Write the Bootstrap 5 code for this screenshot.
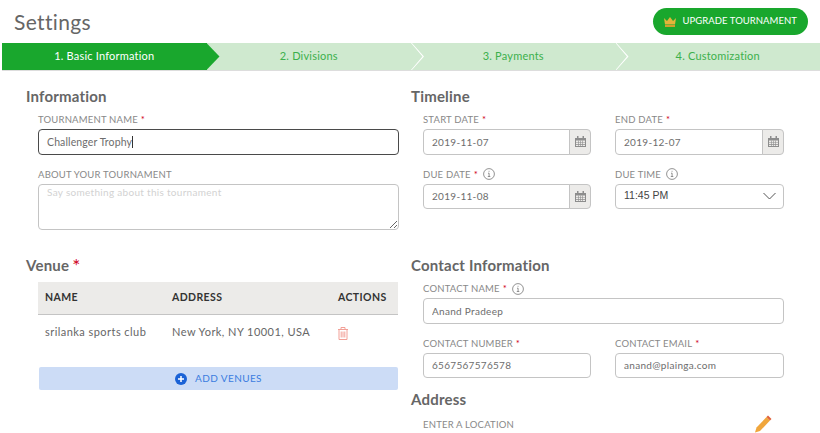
<!DOCTYPE html>
<html lang="en">
<head>
    <meta charset="UTF-8">
    <title>Settings</title>
    <link href="https://cdn.jsdelivr.net/npm/bootstrap@5.3.0/dist/css/bootstrap.min.css" rel="stylesheet">
    <style>
        html, body { height: 433px; overflow: hidden; }
        body { font-family: Lato, "Liberation Sans", sans-serif; color: #666; background: #fff; letter-spacing: .3px; }
        .top-head { height: 43px; padding: 0 12px 0 14px; }
        .page-title { font-size: 21px; line-height: 1; font-weight: 400; color: #666; margin: 0; letter-spacing: .35px; }
        .upgrade-btn { background: #19a72d; color: #fff; border: 0; border-radius: 14px; height: 27px; width: 155px; font-size: 9.5px; letter-spacing: .05px; padding: 0; }
        .upgrade-btn:hover { background: #19a72d; color: #fff; }
        .stepper { height: 28px; margin-left: 2px; background: #cfe9cf; border-bottom: 1px solid #ddd; }
        .step-item { position: relative; width: 204.5px; font-size: 11px; letter-spacing: .2px; color: #3cb04c; }
        .step-item:last-child { width: auto; flex-grow: 1; }
        .step-active { background: #19a72d; color: #fff; }
        .step-item::after { content: ""; position: absolute; z-index: 1; top: 0; right: -13px; width: 13px; height: 27px; }
        .step-active::after { background: #19a72d; clip-path: polygon(0 0, 100% 50%, 0 100%); }
        .step-plain::after { background: #fff; clip-path: polygon(0 0, 7% 0, 100% 50%, 7% 100%, 0 100%, 88% 50%); }
        .step-item:last-child::after { display: none; }
        .form-area { padding: 15px 0 0 26px; }
        .form-side { width: 385px; }
        .top-block { height: 169px; }
        .block-title { font-size: 15px; line-height: 20px; font-weight: 700; color: #666; margin: 0 0 7px; letter-spacing: .2px; }
        .block-body { padding-left: 12px; width: 373px; }
        .field-box { margin-bottom: 13px; }
        .field-label { display: flex; align-items: center; font-size: 9.5px; line-height: 13px; height: 13px; color: #888; margin-bottom: 3px; letter-spacing: .2px; }
        .req { color: #d0021b; margin-left: 3px; }
        .info-ic { margin-left: 5px; width: 12px; height: 12px; }
        .form-control, .form-select, .input-group-text { font-size: 10px; border-color: #c4c4c4; border-radius: 4px; letter-spacing: .3px; color: #6d6d6d; }
        .form-control, .form-select { height: 25.5px; min-height: 0; padding: 0 8px; }
        .form-control:focus { border-color: #4a4a4a; box-shadow: none; color: #6d6d6d; }
        .name-wrap { position: relative; }
        .name-input { font-size: 10.5px; letter-spacing: .12px; border-color: #4a4a4a; caret-color: transparent; }
        .fake-caret { position: absolute; left: 94px; top: 7px; width: 1px; height: 12px; background: #333; }
        textarea.form-control { height: 46.5px; padding-top: 0; resize: vertical; }
        .form-control::placeholder { color: #d2d2d2; }
        .input-group-text { width: 22px; padding: 0; justify-content: center; background: #ecebe9; }
        .form-select { font-family: "Liberation Sans", sans-serif; font-size: 10.5px; letter-spacing: 0; color: #444; background-size: 13px 8px; background-position: right 7px center; background-image: url("data:image/svg+xml,%3csvg xmlns='http://www.w3.org/2000/svg' viewBox='0 0 13 8'%3e%3cpath fill='none' stroke='%23555' d='M.5 1l6 6 6-6'/%3e%3c/svg%3e"); }
        .two-col { display: grid; grid-template-columns: 168px 169px; column-gap: 24px; }
        .venue-table { width: 360px; font-size: 11px; margin-bottom: 17px; table-layout: fixed; }
        .venue-table th { background: #ecebe9; color: #333; height: 32px; padding: 0 7px; font-weight: 700; font-size: 10.5px; vertical-align: middle; border-bottom: 1px solid #c4c4c4; letter-spacing: .4px; }
        .venue-table td { height: 36px; padding: 0 7px; color: #666; vertical-align: middle; border: 0; letter-spacing: .45px; }
        .add-venue { width: 359px; height: 23px; margin-left: 1px; background: #ccdcf6; color: #3b7de0; border: 0; font-size: 10px; letter-spacing: .4px; border-radius: 2px; padding: 0; }
        .add-venue:hover { background: #ccdcf6; color: #3b7de0; }
        .venue-star { color: #d0021b; font-weight: 400; font-size: 19px; line-height: 1; margin-left: 3px; vertical-align: -2px; }
        .address-title { margin-top: -2px; }
        .address-row { width: 349px; margin-top: -1px; }
        .address-label { margin-top: 3px; }
    </style>
</head>
<body>
<div class="top-head d-flex justify-content-between align-items-center">
    <h1 class="page-title">Settings</h1>
    <button class="btn upgrade-btn d-flex align-items-center justify-content-center gap-1" type="button">
        <svg width="12" height="10" viewBox="0 0 12 10"><path fill="#e0b53a" d="M0 1l3 3 3-4 3 4 3-3-1 6.5H1z"/><rect x="1" y="8" width="10" height="2" fill="#cfa02c"/></svg>
        &nbsp;UPGRADE TOURNAMENT
    </button>
</div>

<div class="stepper d-flex">
    <div class="step-item step-active d-flex align-items-center justify-content-center">1. Basic Information</div>
    <div class="step-item step-plain d-flex align-items-center justify-content-center">2. Divisions</div>
    <div class="step-item step-plain d-flex align-items-center justify-content-center">3. Payments</div>
    <div class="step-item step-plain d-flex align-items-center justify-content-center">4. Customization</div>
</div>

<div class="form-area">
    <div class="d-flex top-block">
        <div class="form-side">
            <h2 class="block-title">Information</h2>
            <div class="block-body">
                <div class="field-box">
                    <label class="field-label">TOURNAMENT NAME<span class="req">*</span></label>
                    <div class="name-wrap">
                        <input type="text" class="form-control name-input" value="Challenger Trophy">
                        <span class="fake-caret"></span>
                    </div>
                </div>
                <div class="field-box">
                    <label class="field-label">ABOUT YOUR TOURNAMENT</label>
                    <textarea class="form-control" placeholder="Say something about this tournament"></textarea>
                </div>
            </div>
        </div>
        <div class="form-side">
            <h2 class="block-title">Timeline</h2>
            <div class="block-body two-col">
                <div class="field-box">
                    <label class="field-label">START DATE<span class="req">*</span></label>
                    <div class="input-group">
                        <input type="text" class="form-control" value="2019-11-07">
                        <span class="input-group-text"><svg width="11" height="11" viewBox="0 0 11 11"><use href="#cal"/></svg></span>
                    </div>
                </div>
                <div class="field-box">
                    <label class="field-label">END DATE<span class="req">*</span></label>
                    <div class="input-group">
                        <input type="text" class="form-control" value="2019-12-07">
                        <span class="input-group-text"><svg width="11" height="11" viewBox="0 0 11 11"><use href="#cal"/></svg></span>
                    </div>
                </div>
                <div class="field-box">
                    <label class="field-label">DUE DATE<span class="req">*</span><svg class="info-ic" viewBox="0 0 12 12"><use href="#info"/></svg></label>
                    <div class="input-group">
                        <input type="text" class="form-control" value="2019-11-08">
                        <span class="input-group-text"><svg width="11" height="11" viewBox="0 0 11 11"><use href="#cal"/></svg></span>
                    </div>
                </div>
                <div class="field-box">
                    <label class="field-label">DUE TIME<svg class="info-ic" viewBox="0 0 12 12"><use href="#info"/></svg></label>
                    <select class="form-select"><option>11:45 PM</option></select>
                </div>
            </div>
        </div>
    </div>

    <div class="d-flex">
        <div class="form-side">
            <h2 class="block-title">Venue<span class="venue-star">*</span></h2>
            <div class="block-body">
                <table class="table venue-table">
                    <thead>
                    <tr><th style="width:127px">NAME</th><th style="width:166px">ADDRESS</th><th>ACTIONS</th></tr>
                    </thead>
                    <tbody>
                    <tr>
                        <td>srilanka sports club</td>
                        <td>New York, NY 10001, USA</td>
                        <td><svg width="10" height="13" viewBox="0 0 10 13" fill="none" stroke="#f2a097"><path d="M0 2.500h10M3 2.500V.5h4v2M1 2.500V12.500h8V2.500M3.200 4.500v6M5 4.500v6M6.800 4.500v6"/></svg></td>
                    </tr>
                    </tbody>
                </table>
                <button class="btn add-venue d-flex align-items-center justify-content-center gap-2" type="button">
                    <svg width="12" height="12" viewBox="0 0 12 12"><circle cx="6" cy="6" r="6" fill="#1a62d6"/><path d="M3 6h6M6 3v6" stroke="#fff" stroke-width="1.500"/></svg>
                    ADD VENUES
                </button>
            </div>
        </div>
        <div class="form-side">
            <h2 class="block-title">Contact Information</h2>
            <div class="block-body">
                <div class="field-box">
                    <label class="field-label">CONTACT NAME<span class="req">*</span><svg class="info-ic" viewBox="0 0 12 12"><use href="#info"/></svg></label>
                    <input type="text" class="form-control" value="Anand Pradeep">
                </div>
                <div class="two-col">
                    <div class="field-box">
                        <label class="field-label">CONTACT NUMBER<span class="req">*</span></label>
                        <input type="text" class="form-control" value="6567567576578">
                    </div>
                    <div class="field-box">
                        <label class="field-label">CONTACT EMAIL<span class="req">*</span></label>
                        <input type="text" class="form-control" value="anand@plainga.com">
                    </div>
                </div>
            </div>
            <h2 class="block-title address-title">Address</h2>
            <div class="block-body">
                <div class="address-row d-flex justify-content-between align-items-start">
                    <label class="field-label address-label">ENTER A LOCATION</label>
                    <svg width="18" height="18" viewBox="0 0 18 18"><path fill="#f0a63c" d="M12.500 2l3.500 3.500L6 16l-5 1.500L2.500 12.500z"/><path fill="#e0603c" d="M12.500 2l1.500-1.500 3.500 3.500L16 5.500z"/></svg>
                </div>
            </div>
        </div>
    </div>
</div>

<svg width="0" height="0" class="d-block">
    <defs>
        <g id="cal" fill="#8d8d8d">
            <path d="M0 2h11v9H0zM1 4.500v5.500h9V4.500z" fill-rule="evenodd"/>
            <rect x="2" y="0" width="1.500" height="3"/><rect x="7.500" y="0" width="1.500" height="3"/>
            <path d="M1 6.500h9v.6H1zM1 8.300h9v.6H1zM3 4.500h.6V10H3zM5.200 4.500h.6V10h-.6zM7.400 4.500h.6V10h-.6z"/>
        </g>
        <g id="info" fill="none" stroke="#777" stroke-width=".8">
            <circle cx="6" cy="6" r="5.400"/>
            <path d="M5 5.200h1.100v3.300M4.800 8.500h2.500M5.600 3.300h.9"/>
        </g>
    </defs>
</svg>
</body>
</html>
